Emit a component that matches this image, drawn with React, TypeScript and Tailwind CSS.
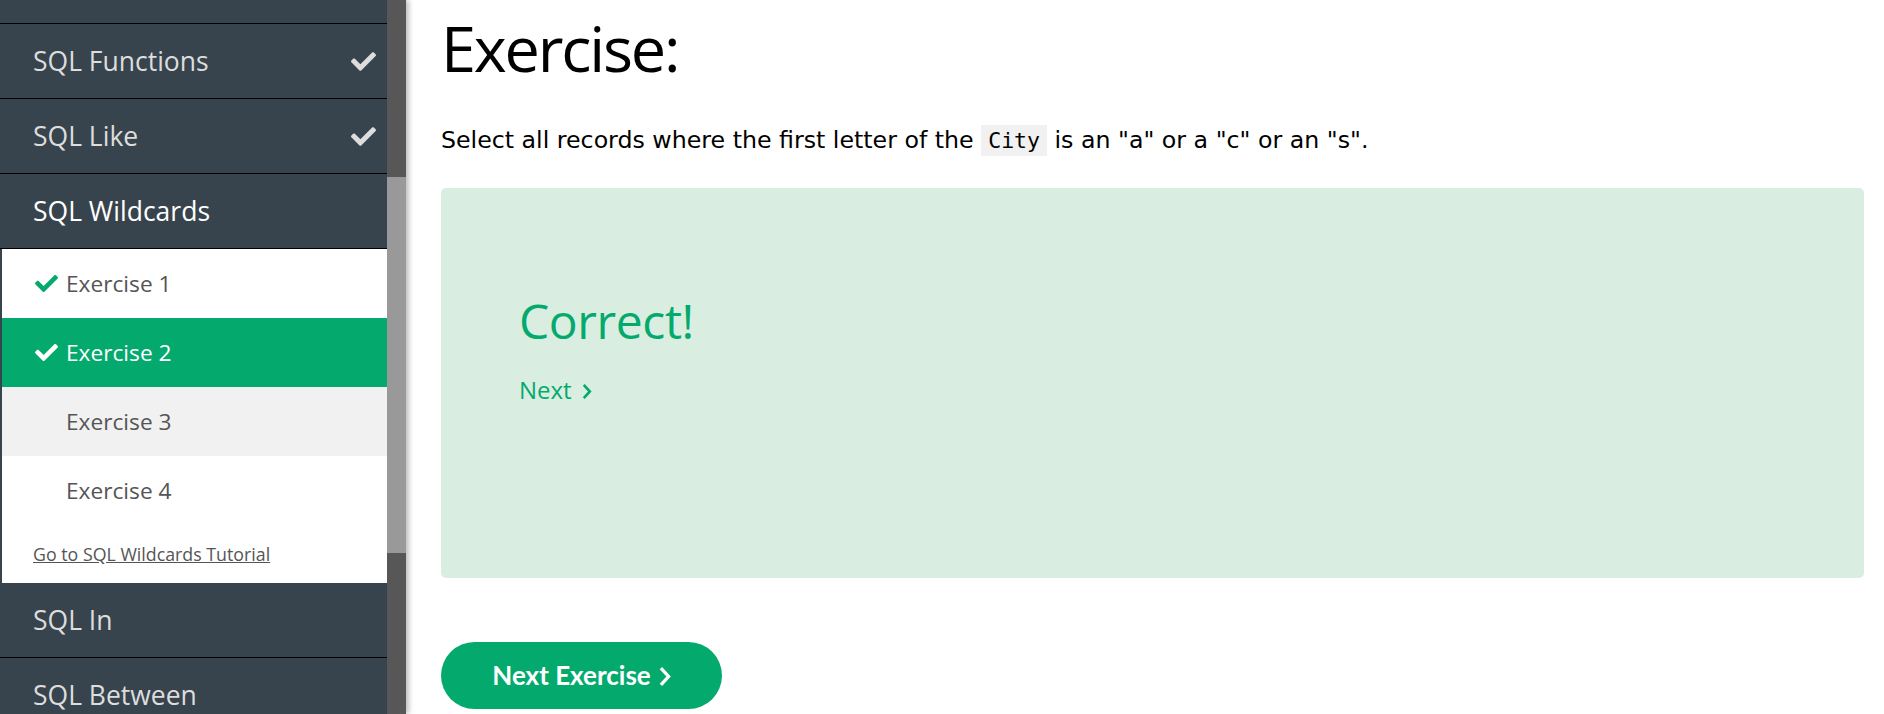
import React from "react";
import { FaCheck } from "react-icons/fa";

const Chevron = ({ className }: { className?: string }) => (
  <svg viewBox="0 0 10 16" className={className} aria-hidden="true">
    <path d="M2.5 2 L8 8 L2.5 14" fill="none" stroke="currentColor" strokeWidth="2.8" strokeLinecap="square" />
  </svg>
);

const DarkItem = ({ label, done, active }: { label: string; done?: boolean; active?: boolean }) => (
  <div className="flex h-[75px] shrink-0 items-center justify-between border-b border-black pl-[33px] pr-[11px]">
    <span className={`text-[26.5px] leading-[36px] ${active ? "text-white" : "text-[#dddddd]"}`}>{label}</span>
    {done && <FaCheck className="h-[25px] w-[25px] text-[#dddddd]" />}
  </div>
);

const SubItem = ({ label, done, active, gray }: { label: string; done?: boolean; active?: boolean; gray?: boolean }) => (
  <div
    className={`flex h-[69px] shrink-0 items-center pl-[33px] ${
      active ? "bg-[#04aa6d] text-white" : gray ? "bg-[#f1f1f1] text-[#555555]" : "bg-white text-[#555555]"
    }`}
  >
    <span className="flex w-[31px] items-center">
      {done && <FaCheck className={`h-[23px] w-[23px] ${active ? "text-white" : "text-[#04aa6d]"}`} />}
    </span>
    <span className="text-[22.7px] leading-[30px]">{label}</span>
  </div>
);

export default function App() {
  return (
    <div
      className="flex h-[714px] w-[1884px] overflow-hidden bg-white"
      style={{ fontFamily: "'Open Sans', 'Noto Sans', sans-serif" }}
    >
      <div className="relative z-10 flex shrink-0 shadow-[3px_0_5px_rgba(0,0,0,0.25)]">
        <div className="flex w-[387px] flex-col bg-[#38444d]">
          <div className="h-[24px] shrink-0 border-b border-black" />
          <DarkItem label="SQL Functions" done />
          <DarkItem label="SQL Like" done />
          <DarkItem label="SQL Wildcards" active />
          <div className="ml-[2px] flex h-[334px] shrink-0 flex-col bg-white">
            <SubItem label="Exercise 1" done />
            <SubItem label="Exercise 2" done active />
            <SubItem label="Exercise 3" gray />
            <SubItem label="Exercise 4" />
            <div className="pl-[31px] pt-[17px]">
              <a href="#" className="text-[17.8px] leading-[24px] text-[#555555] underline">
                Go to SQL Wildcards Tutorial
              </a>
            </div>
          </div>
          <DarkItem label="SQL In" />
          <DarkItem label="SQL Between" />
        </div>
        <div className="flex w-[19px] flex-col bg-[#575757]">
          <div className="h-[177px] shrink-0" />
          <div className="h-[376px] shrink-0 bg-[#999999]" />
        </div>
      </div>

      <main className="flex flex-1 flex-col pl-[35px] pr-[20px]">
        <h1 className="mt-[8px] h-[80px] text-[63px] leading-[80px] font-normal tracking-[-2.2px] text-black">
          Exercise:
        </h1>
        <p
          className="mt-[35px] text-[23.7px] leading-[34px] text-black"
          style={{ fontFamily: "Verdana, 'DejaVu Sans', sans-serif" }}
        >
          Select all records where the first letter of the{" "}
          <code
            className="bg-[#f1f1f1] px-[7px] py-[3px] text-[21.5px]"
            style={{ fontFamily: "Consolas, 'DejaVu Sans Mono', monospace" }}
          >
            City
          </code>{" "}
          is an "a" or a "c" or an "s".
        </p>
        <div className="mt-[30px] flex h-[390px] flex-col rounded-[5px] bg-[#d9eee1] pl-[78px] pt-[105px]">
          <div className="text-[48px] leading-[56px] tracking-[-0.4px] text-[#04aa6d]">Correct!</div>
          <a href="#" className="mt-[25px] flex items-center gap-[10px] text-[24px] leading-[32px] text-[#04aa6d]">
            Next
            <Chevron className="mt-[2px] h-[15px] w-[10px]" />
          </a>
        </div>
        <button
          className="mt-[64px] flex h-[67px] w-[281px] items-center justify-center gap-[8px] rounded-full bg-[#04aa6d] text-[26px] font-bold text-white"
          style={{ fontFamily: "Lato, 'Open Sans', sans-serif" }}
        >
          Next Exercise
          <Chevron className="mt-[2px] h-[19px] w-[12px]" />
        </button>
      </main>
    </div>
  );
}
